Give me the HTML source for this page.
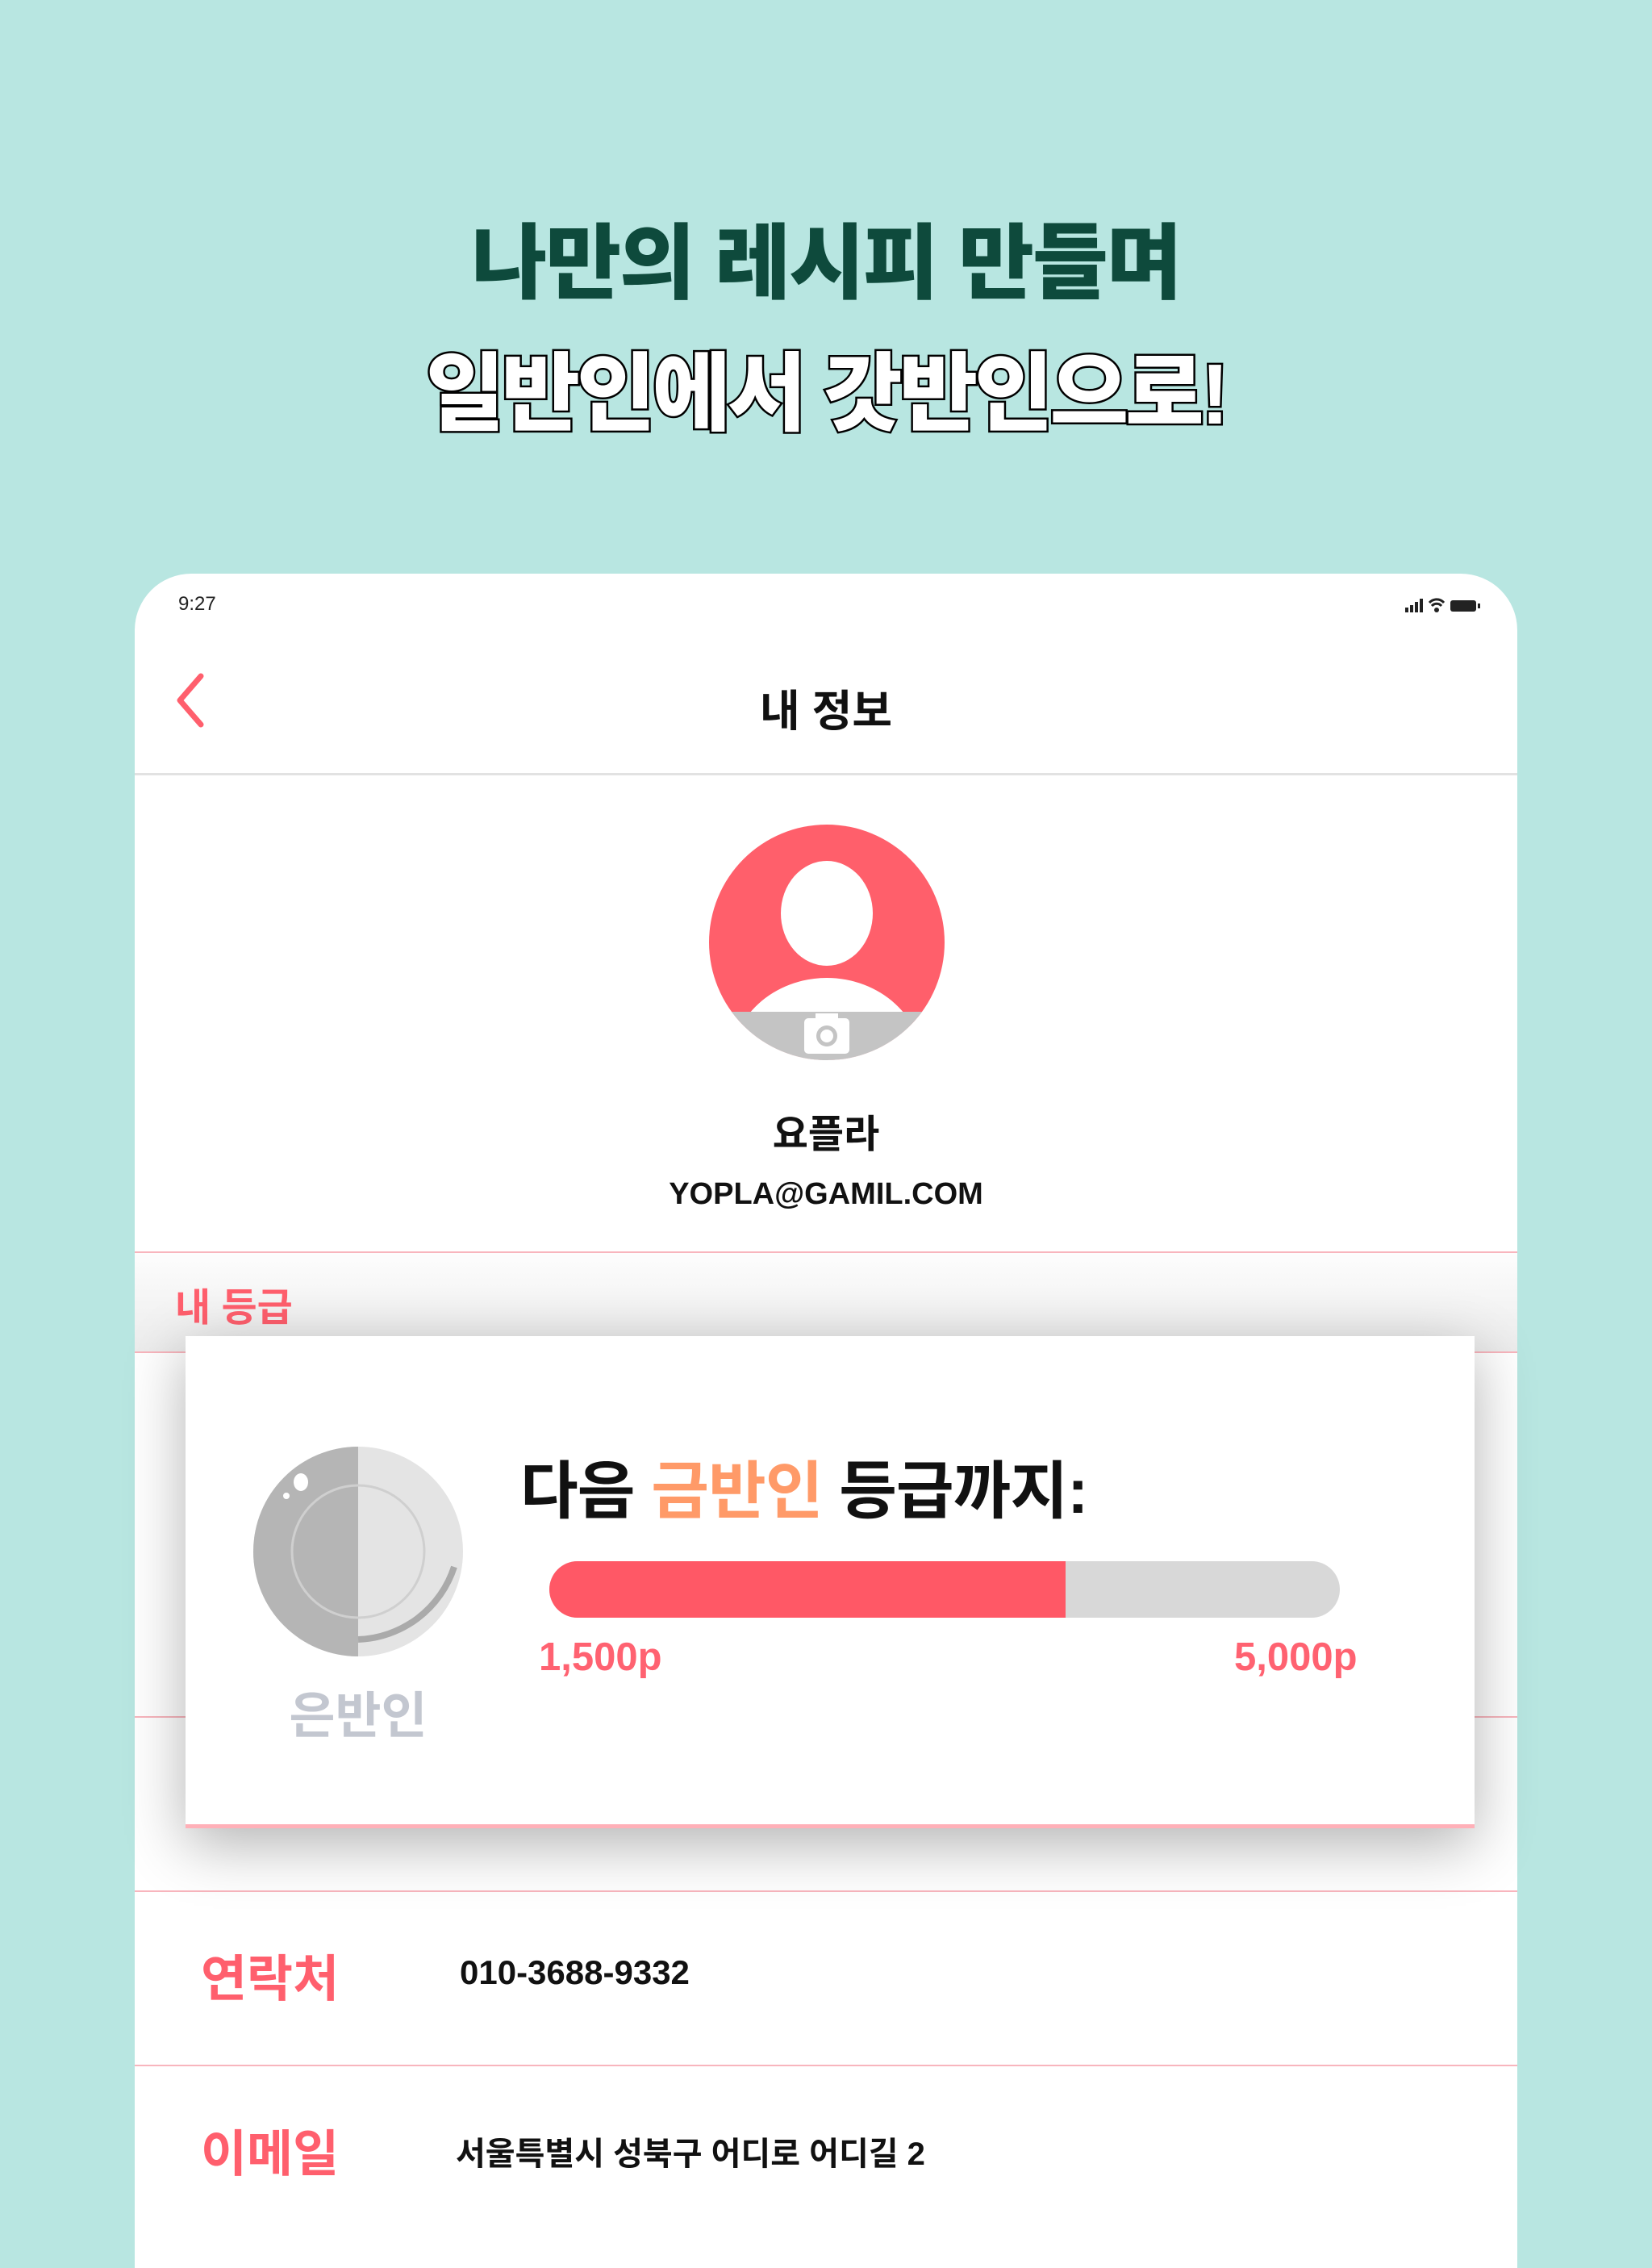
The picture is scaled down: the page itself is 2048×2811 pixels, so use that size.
<!DOCTYPE html>
<html><head><meta charset="utf-8"><style>
*{margin:0;padding:0;box-sizing:border-box}
body{width:2048px;height:2732px;background:#b8e6e1;position:relative;overflow:hidden;font-family:"Liberation Sans","Noto Sans CJK KR",sans-serif}
.a{position:absolute}
.t1{left:0;width:2048px;top:245px;text-align:center;font-size:102px;font-weight:900;color:#0e4a3c;letter-spacing:-2px}
.t2{left:0;width:2048px;top:402px;text-align:center;font-size:106px;font-weight:900;color:#fff;letter-spacing:-4px;-webkit-text-stroke:5px #000;paint-order:stroke fill}
.phone{left:167px;top:711px;width:1714px;height:2100px;background:#fff;border-radius:70px 70px 0 0;overflow:hidden}
.line{left:0;width:1714px;height:2px;background:#f8b5bd}
.lbl{color:#ff5f6d;font-weight:700}
</style></head><body>
<div class="a t1">나만의 레시피 만들며</div>
<div class="a t2">일반인에서 갓반인으로!</div>
<div class="a phone">
  <div class="a" style="left:54px;top:24px;font-size:24px;color:#222">9:27</div>
  <svg class="a" style="left:1575px;top:28px" width="110" height="22" viewBox="0 0 110 22">
    <rect x="0" y="14" width="4" height="6" fill="#222"/><rect x="6" y="11" width="4" height="9" fill="#222"/><rect x="12" y="7" width="4" height="13" fill="#222"/><rect x="18" y="3" width="4" height="17" fill="#222"/>
    <path d="M30 8a12 12 0 0 1 18 0M33 12a8 8 0 0 1 12 0" stroke="#222" stroke-width="3" fill="none"/><circle cx="39" cy="17" r="3" fill="#222"/>
    <rect x="56" y="5" width="32" height="14" rx="3" fill="#222"/><rect x="90" y="9" width="3" height="6" fill="#222"/>
  </svg>
  <svg class="a" style="left:48px;top:122px" width="40" height="70" viewBox="0 0 40 70"><path d="M34 5L8 35L34 65" stroke="#ff5f6d" stroke-width="7" fill="none" stroke-linecap="round" stroke-linejoin="round"/></svg>
  <div class="a" style="left:0;width:1714px;top:126px;text-align:center;font-size:54px;font-weight:700;color:#111">내 정보</div>
  <div class="a" style="left:0;top:247px;width:1714px;height:3px;background:#e2e2e2"></div>
  <svg class="a" style="left:712px;top:311px" width="292" height="292" viewBox="0 0 292 292">
    <defs><clipPath id="c"><circle cx="146" cy="146" r="146"/></clipPath></defs>
    <g clip-path="url(#c)">
      <rect width="292" height="292" fill="#ff5f6b"/>
      <ellipse cx="146" cy="110" rx="57" ry="65" fill="#fff"/>
      <ellipse cx="146" cy="300" rx="120" ry="110" fill="#fff"/>
      <rect y="232" width="292" height="60" fill="#c4c4c4"/>
      <rect x="118" y="240" width="56" height="44" rx="5" fill="#fff"/><rect x="132" y="234" width="28" height="10" fill="#fff"/>
      <circle cx="146" cy="262" r="13" fill="#c4c4c4"/><circle cx="146" cy="262" r="8" fill="#fff"/>
    </g>
  </svg>
  <div class="a" style="left:0;width:1714px;top:655px;text-align:center;font-size:48px;font-weight:700;color:#111">요플라</div>
  <div class="a" style="left:0;width:1714px;top:748px;text-align:center;font-size:38px;font-weight:700;color:#111">YOPLA@GAMIL.COM</div>
  <div class="a line" style="top:840px"></div>
  <div class="a" style="left:0;top:842px;width:1714px;height:122px;background:linear-gradient(#fdfdfd,#ececec)"></div>
  <div class="a lbl" style="left:50px;top:870px;font-size:48px">내 등급</div>
  <div class="a line" style="top:964px"></div>
  <div class="a line" style="top:1416px"></div>
  <div class="a line" style="top:1632px"></div>
  <div class="a lbl" style="left:82px;top:1691px;font-size:62px">연락처</div>
  <div class="a" style="left:403px;top:1710px;font-size:42px;font-weight:700;color:#111">010-3688-9332</div>
  <div class="a line" style="top:1848px"></div>
  <div class="a lbl" style="left:82px;top:1908px;font-size:62px">이메일</div>
  <div class="a" style="left:398px;top:1926px;font-size:40px;font-weight:700;color:#111">서울특별시 성북구 어디로 어디길 2</div>
</div>
<div class="a" style="left:230px;top:1656px;width:1598px;height:610px;background:#fff;box-shadow:0 20px 70px rgba(0,0,0,.3);border-bottom:5px solid #ffb0b8">
  <svg class="a" style="left:83px;top:136px" width="262" height="262" viewBox="0 0 262 262">
    <circle cx="131" cy="131" r="130" fill="#e4e4e4"/>
    <path d="M131 1A130 130 0 0 0 131 261Z" fill="#b5b5b5"/>
    <circle cx="131" cy="131" r="82" fill="none" stroke="#cfcfcf" stroke-width="3"/>
    <path d="M131 240A130 130 0 0 0 250 150" stroke="#aaa" stroke-width="8" fill="none"/>
    <ellipse cx="60" cy="45" rx="9" ry="11" fill="#fff"/><circle cx="42" cy="62" r="4" fill="#fff"/>
  </svg>
  <div class="a" style="left:83px;width:262px;top:420px;text-align:center;font-size:62px;color:#c3c7d0;font-weight:700">은반인</div>
  <div class="a" style="left:415px;top:130px;font-size:78px;font-weight:700;color:#111;letter-spacing:-1px">다음 <span style="color:#ff9a68">금반인</span> 등급까지:</div>
  <div class="a" style="left:451px;top:279px;width:980px;height:70px;border-radius:35px;background:#d8d8d8;overflow:hidden"><div style="width:640px;height:70px;background:#ff5866"></div></div>
  <div class="a" style="left:438px;top:370px;font-size:49px;color:#ff6271;font-weight:700">1,500p</div>
  <div class="a" style="left:1300px;width:152px;top:370px;text-align:right;font-size:49px;color:#ff6271;font-weight:700">5,000p</div>
</div>
</body></html>
